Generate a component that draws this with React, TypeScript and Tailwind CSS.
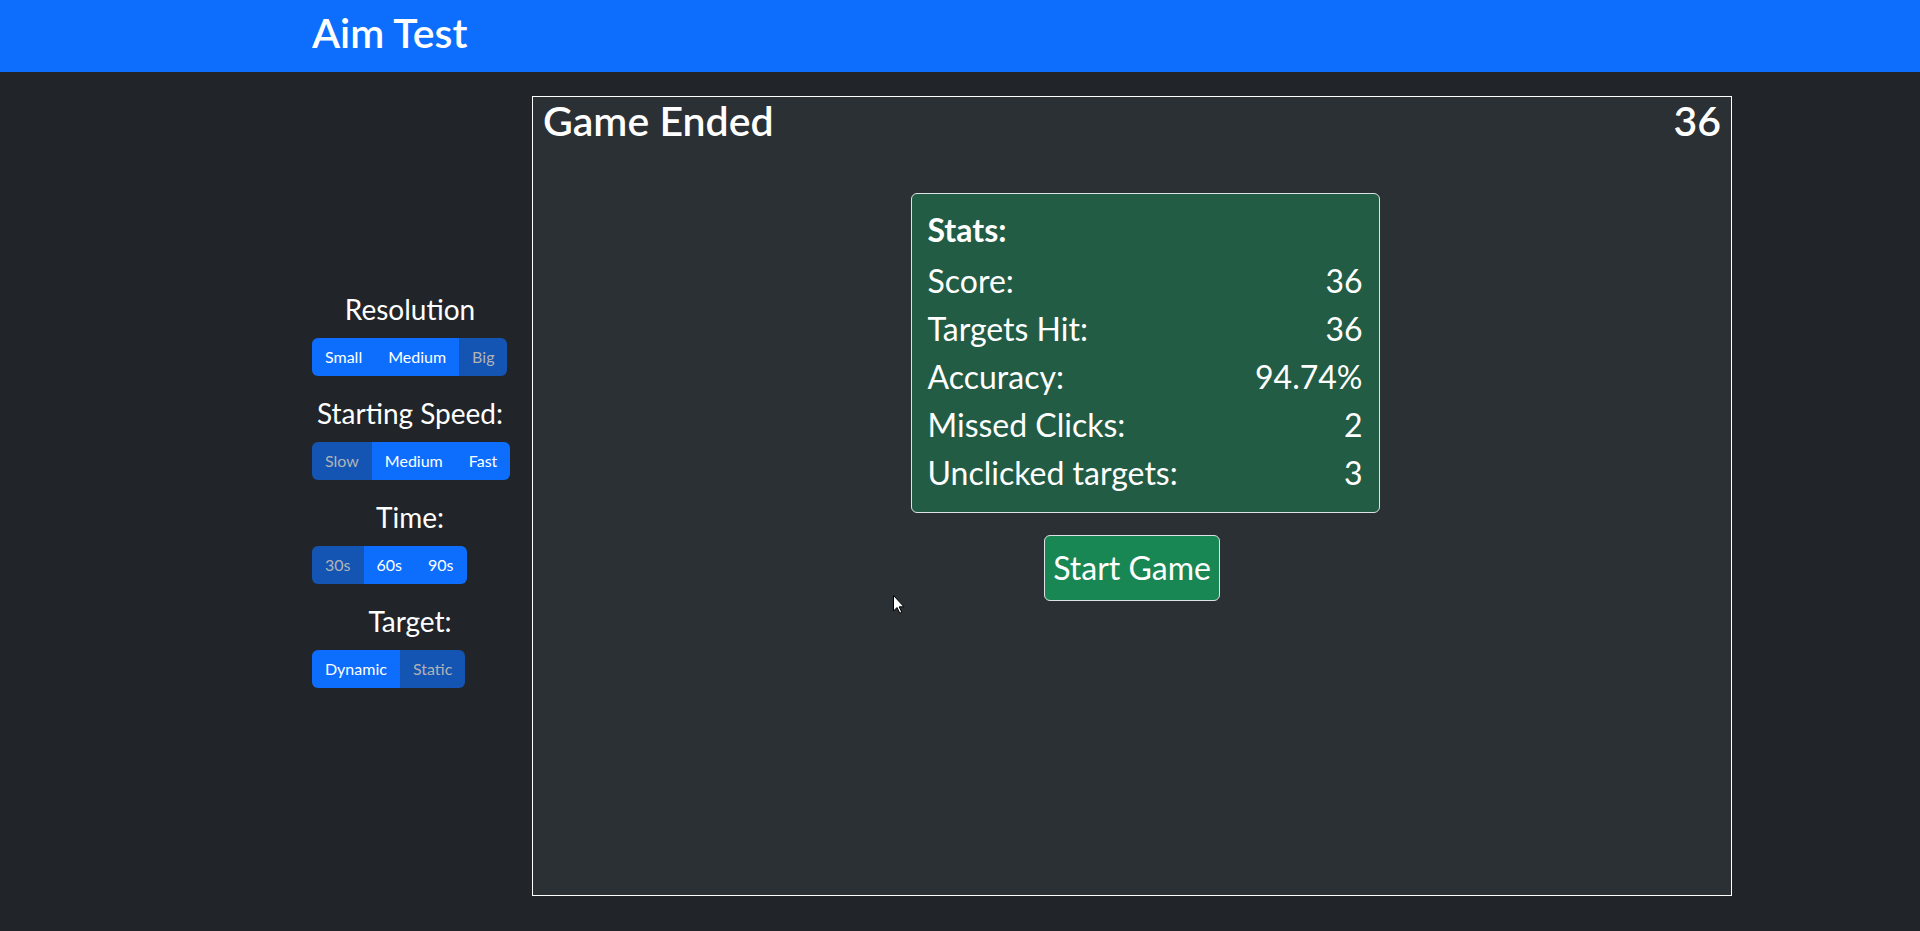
import React from "react";

type Option = { label: string; disabled?: boolean };

const SETTINGS: { title: string; options: Option[] }[] = [
  { title: "Resolution", options: [{ label: "Small" }, { label: "Medium" }, { label: "Big", disabled: true }] },
  { title: "Starting Speed:", options: [{ label: "Slow", disabled: true }, { label: "Medium" }, { label: "Fast" }] },
  { title: "Time:", options: [{ label: "30s", disabled: true }, { label: "60s" }, { label: "90s" }] },
  { title: "Target:", options: [{ label: "Dynamic" }, { label: "Static", disabled: true }] },
];

const STATS: [string, string][] = [
  ["Score:", "36"],
  ["Targets Hit:", "36"],
  ["Accuracy:", "94.74%"],
  ["Missed Clicks:", "2"],
  ["Unclicked targets:", "3"],
];

function ButtonGroup({ options }: { options: Option[] }) {
  return (
    <div className="flex self-start rounded-md overflow-hidden">
      {options.map((o) => (
        <button
          key={o.label}
          className={
            o.disabled
              ? "h-[38px] px-[13px] text-[16px] bg-[#1454b3] text-[#b1b3b4]"
              : "h-[38px] px-[13px] text-[16px] bg-[#0d6efd] text-white"
          }
        >
          {o.label}
        </button>
      ))}
    </div>
  );
}

export default function App() {
  return (
    <div
      className="relative min-h-screen bg-[#212529] text-white"
      style={{ fontFamily: 'Lato, "Open Sans", sans-serif' }}
    >
      <header className="bg-[#0d6efd] h-[72px]">
        <div className="w-[1320px] mx-auto px-3">
          <h1 className="text-[41px] font-semibold leading-[65px]">Aim Test</h1>
        </div>
      </header>

      <main className="w-[1320px] mx-auto px-3 mt-6 flex">
        <div className="w-[196px] mr-6 shrink-0 flex flex-col pt-[196px]">
          {SETTINGS.map((s, i) => (
            <div key={s.title} className={i > 0 ? "flex flex-col mt-5" : "flex flex-col"}>
              <div className="text-[28px] leading-[34px] text-center whitespace-nowrap mb-3">{s.title}</div>
              <ButtonGroup options={s.options} />
            </div>
          ))}
        </div>

        <div className="w-[1200px] h-[800px] shrink-0 border border-white bg-[#2b3035] flex flex-col">
          <div className="flex justify-between px-[10px] text-[41px] font-semibold leading-[48px]">
            <span>Game Ended</span>
            <span>36</span>
          </div>

          <div className="flex flex-col items-center mt-12">
            <div className="w-[469px] ml-[26px] rounded-md border border-[#dee2e6] bg-[#225c45] px-4 pt-3 pb-[15px] text-[32px] leading-[48px]">
              <div className="font-bold mb-[3px]">Stats:</div>
              {STATS.map(([k, v]) => (
                <div key={k} className="flex justify-between">
                  <span>{k}</span>
                  <span>{v}</span>
                </div>
              ))}
            </div>
            <button className="mt-[22px] rounded-md border border-[#dee2e6] bg-[#198754] px-2 py-2 text-[32px] leading-[48px] text-white">
              Start Game
            </button>
          </div>
        </div>
      </main>

      <svg
        className="absolute left-[893px] top-[595px]"
        width="12"
        height="19"
        viewBox="0 0 12 19"
      >
        <path d="M0.5 0.5 L0.5 16 L4 12.5 L6.8 18.2 L8.8 17.3 L6.2 11.8 L11 11.8 Z" fill="#fff" stroke="#000" strokeWidth="1" />
      </svg>
    </div>
  );
}
